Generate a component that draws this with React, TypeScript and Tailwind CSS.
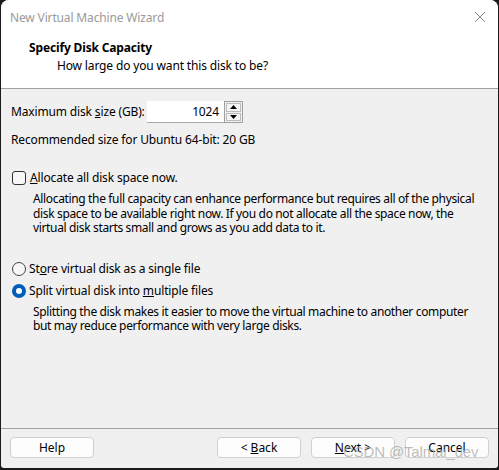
import React from 'react';

const font = { fontFamily: '"Segoe UI", "Noto Sans", "Open Sans", sans-serif' };

const Btn: React.FC<{ children: React.ReactNode; className?: string }> = ({ children, className }) => (
  <div
    className={`h-[21px] w-[84px] flex items-center justify-center rounded-[4px] border border-[#d0d0d0] bg-[#fdfdfd] text-[12px] text-black ${className ?? ''}`}
  >
    {children}
  </div>
);

export default function App() {
  return (
    <div className="w-[499px] h-[470px] bg-[#1b1b1b] overflow-hidden" style={font}>
      <div className="relative mx-px h-[468px] rounded-t-[8px] rounded-b-[3px] bg-[#f0f0f0] overflow-hidden flex flex-col tracking-[-0.15px]">
        {/* title bar + header */}
        <div className="bg-white h-[89px] border-b border-[#a0a0a0] shrink-0">
          <div className="h-[34px] flex items-center justify-between pl-[9px] pr-[10px]">
            <span className="text-[12px] text-[#9a9a9a] mt-[1px]">New Virtual Machine Wizard</span>
            <svg width="12" height="12" viewBox="0 0 12 12" className="mr-[2px]">
              <path d="M1 1L11 11M11 1L1 11" stroke="#8a8a8a" strokeWidth="1" />
            </svg>
          </div>
          <div className="pl-[28px] pt-[6px] text-[12px] font-bold text-black leading-[16px]">Specify Disk Capacity</div>
          <div className="pl-[56px] pt-[2px] text-[12px] text-black leading-[16px]">How large do you want this disk to be?</div>
        </div>

        {/* body */}
        <div className="flex-1 px-[10px] pt-[12px] text-[12px] text-black leading-[16px]">
          <div className="flex items-center h-[22px]">
            <span className="w-[136px] whitespace-nowrap">
              Maximum disk <span className="underline">s</span>ize (GB):
            </span>
            <div className="h-[22px] w-[77px] bg-white flex items-center justify-end pr-[5px] border-b border-[#a8a8a8]">1024</div>
            <div className="h-[22px] w-[19px] border border-[#a0a0a0] flex flex-col bg-[#f0f0f0] p-px gap-px">
              <div className="flex-1 border border-[#bcbcbc] flex items-center justify-center bg-[#f4f4f4]">
                <svg width="7" height="4" viewBox="0 0 7 4"><path d="M0 4L3.5 0L7 4Z" fill="#000" /></svg>
              </div>
              <div className="flex-1 border border-[#bcbcbc] flex items-center justify-center bg-[#f4f4f4]">
                <svg width="7" height="4" viewBox="0 0 7 4"><path d="M0 0L3.5 4L7 0Z" fill="#000" /></svg>
              </div>
            </div>
          </div>
          <div className="mt-[9px]">Recommended size for Ubuntu 64-bit: 20 GB</div>

          <div className="mt-[22px] flex items-center">
            <div className="w-[14px] h-[14px] rounded-[3px] border border-[#333] bg-[#f7f7f7] mr-[4px] ml-px" />
            <span>
              <span className="underline">A</span>llocate all disk space now.
            </span>
          </div>
          <div className="pl-[22px] mt-[6px] leading-[14.5px] tracking-[-0.35px]">
            Allocating the full capacity can enhance performance but requires all of the physical disk space to be available right now. If you do not allocate all the space now, the virtual disk starts small and grows as you add data to it.
          </div>

          <div className="mt-[25px] flex items-center">
            <div className="w-[14px] h-[14px] rounded-full border border-[#444] bg-[#f7f7f7] mr-[3px] ml-px" />
            <span>
              St<span className="underline">o</span>re virtual disk as a single file
            </span>
          </div>
          <div className="mt-[6px] flex items-center">
            <div className="w-[14px] h-[14px] rounded-full bg-[#005fb8] mr-[3px] ml-px flex items-center justify-center">
              <div className="w-[6px] h-[6px] rounded-full bg-white" />
            </div>
            <span>
              Split virtual disk into <span className="underline">m</span>ultiple files
            </span>
          </div>
          <div className="pl-[22px] mt-[6px] leading-[14.5px] tracking-[-0.35px]">
            Splitting the disk makes it easier to move the virtual machine to another computer but may reduce performance with very large disks.
          </div>
        </div>

        {/* footer */}
        <div className="h-[40px] shrink-0 border-t border-[#a0a0a0] flex items-center px-[9px] pb-[2px] tracking-normal">
          <Btn>Help</Btn>
          <div className="flex-1" />
          <Btn>
            &lt; <span className="underline ml-[3px]">B</span>ack
          </Btn>
          <Btn className="ml-[10px]">
            <span className="underline">N</span>ext &gt;
          </Btn>
          <Btn className="ml-[10px]">Cancel</Btn>
        </div>

        <div
          className="absolute left-[342px] top-[443px] whitespace-nowrap text-[15px] leading-[18px] text-[#a8a8a8]/75 pointer-events-none"
          style={{ fontFamily: '"Liberation Sans", Arial, sans-serif' }}
        >
          CSDN @Talmai_dev
        </div>
      </div>
    </div>
  );
}
